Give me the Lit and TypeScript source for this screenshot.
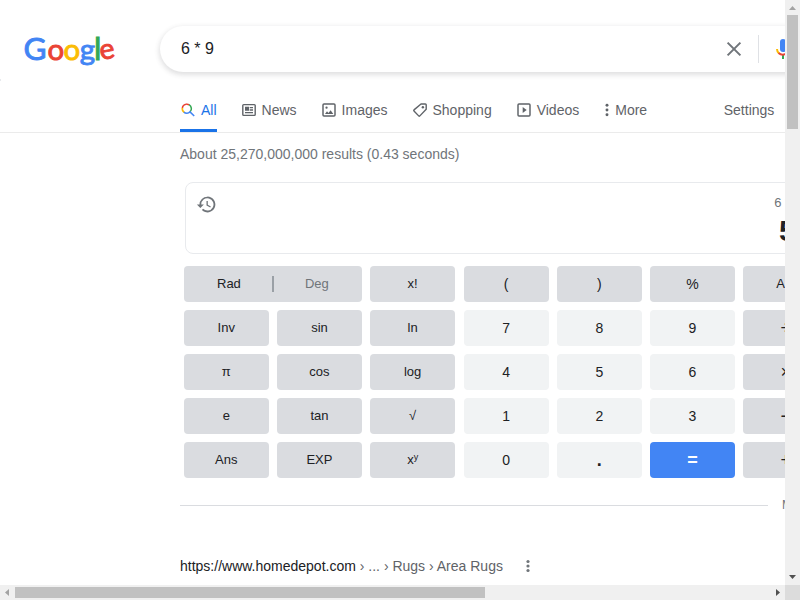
import { LitElement, html, css, svg } from "lit";
import { customElement } from "lit/decorators.js";
import { classMap } from "lit/directives/class-map.js";

const icons = {
  all: svg`<g fill="none" stroke-width="2.3"><path d="M3.500 9.500A6.800 6.800 0 0 1 9.500 3.400" stroke="#ea4335"/><path d="M9.200 3.400A6.800 6.800 0 0 1 14 4.300" stroke="#ea4335"/><path d="M13.600 4A6.800 6.800 0 0 1 15 14.800" stroke="#34a853"/><path d="M3.500 9A6.800 6.800 0 0 0 6.400 15.600" stroke="#fbbc04"/><path d="M5.800 15.100A6.800 6.800 0 0 0 15 14.800L21.300 21.100" stroke="#4285f4"/></g>`,
  news: svg`<path fill="none" stroke="currentColor" stroke-width="2.100" d="M4 4h16a1.300 1.300 0 0 1 1.300 1.300v13.400a1.300 1.300 0 0 1-1.300 1.300H4a1.300 1.300 0 0 1-1.300-1.300V5.300A1.300 1.300 0 0 1 4 4z"/><path fill="currentColor" d="M6 7h6v6H6zM13 7.500h5v2h-5zM13 11h5v2h-5zM6 15h12v2H6z"/>`,
  images: svg`<rect x="3" y="3" width="18" height="18" rx="1.500" fill="none" stroke="currentColor" stroke-width="2.200"/><path fill="currentColor" d="M6 18l3-4 2.200 2.500 3.200-4L18.500 18z"/><circle cx="8.300" cy="8.500" r="1.700" fill="currentColor"/>`,
  shopping: svg`<path fill="none" stroke="currentColor" stroke-width="2.100" stroke-linejoin="round" d="M13.500 3H20a1.300 1.300 0 0 1 1.300 1.300V11L11.800 20.800a1.300 1.300 0 0 1-1.800 0L3 13.600a1.300 1.300 0 0 1 0-1.800z"/><circle cx="16.300" cy="7.800" r="1.800" fill="currentColor"/>`,
  videos: svg`<rect x="3" y="3" width="18" height="18" rx="1.500" fill="none" stroke="currentColor" stroke-width="2.200"/><path fill="currentColor" d="M10 7.500l6 4.500-6 4.500z"/>`,
  more: svg`<circle cx="6" cy="4.800" r="2.200" fill="currentColor"/><circle cx="6" cy="12" r="2.200" fill="currentColor"/><circle cx="6" cy="19.200" r="2.200" fill="currentColor"/>`,
};

const tabs: { id: keyof typeof icons; label: string }[] = [
  { id: "all", label: "All" },
  { id: "news", label: "News" },
  { id: "images", label: "Images" },
  { id: "shopping", label: "Shopping" },
  { id: "videos", label: "Videos" },
  { id: "more", label: "More" },
];

const keys = [
  "x!", "(", ")", "%", "AC",
  "Inv", "sin", "ln", "7", "8", "9", "÷",
  "π", "cos", "log", "4", "5", "6", "×",
  "e", "tan", "√", "1", "2", "3", "−",
  "Ans", "EXP", "xy", "0", ".", "=", "+",
];

@customElement("calc-card")
export class CalcCard extends LitElement {
  static styles = css`
    :host { display: block; width: 644.3px; color: #202124; }
    .display { box-sizing: border-box; height: 72px; margin: 0 1px 12px; border: 1px solid #e8eaed; border-radius: 8px; display: flex; padding: 10px 14px 0 10px; color: #70757a; }
    .history { width: 21px; height: 21px; flex: none; margin-top: .5px; }
    .values { margin-left: auto; text-align: right; white-space: pre; }
    .expr { font-size: 13px; line-height: 18px; padding-top: 1px; }
    .result { font-size: 30px; line-height: 34px; font-weight: bold; color: #202124; margin-top: 2px; }
    .keys { display: grid; grid-template-columns: repeat(7, 85.05px); grid-auto-rows: 36px; gap: 8px 8.15px; }
    .key { background: #dadce0; border-radius: 4px; display: flex; align-items: center; justify-content: center; font-size: 13px; line-height: 34px; padding: 0 .5px 1px 0; box-sizing: border-box; }
    .digit { background: #f1f3f4; }
    .large { font-size: 14px; padding: 0; }
    .operator { font-size: 18px; padding: 0 0 1px; }
    .strong { font-size: 18px; font-weight: bold; padding: 0; }
    .equals { background: #4285f4; color: #fff; }
    .angle { grid-column: span 2; }
    .angle span { flex: 1; text-align: center; padding-left: 2px; }
    .angle .off { color: #70757a; padding: 0 2px 0 0; }
    .split { width: 2px; height: 16px; background: #9aa0a6; }
    sup { font-size: 9px; line-height: 0; vertical-align: 4px; }
  `;
  key(k: string) {
    const digit = /^[0-9.]$/.test(k);
    const cls = {
      key: true,
      digit,
      large: digit || "()%".includes(k),
      operator: "÷×−+".includes(k),
      strong: k === "." || k === "=",
      equals: k === "=",
    };
    return html`<div class=${classMap(cls)}>${k === "xy" ? html`<span>x<sup>y</sup></span>` : k}</div>`;
  }
  render() {
    return html`
      <div class="display">
        <svg class="history" viewBox="0 0 24 24" fill="currentColor"><path d="M13 3a9 9 0 0 0-9 9H1l3.900 3.900.1.100L9 12H6a7 7 0 1 1 2.100 4.900l-1.400 1.400A9 9 0 1 0 13 3zm-1 5v5l4.300 2.500.700-1.200-3.500-2.100V8z"/></svg>
        <div class="values"><div class="expr">6 * 9 =</div><div class="result">54</div></div>
      </div>
      <div class="keys">
        <div class="key angle"><span>Rad</span><i class="split"></i><span class="off">Deg</span></div>
        ${keys.map((k) => this.key(k))}
      </div>`;
  }
}

@customElement("app-root")
export class AppRoot extends LitElement {
  static styles = css`
    :host { display: grid; grid-template: 585px 15px / 785px 15px; width: 800px; height: 600px; overflow: hidden; font-family: "Liberation Sans", Arial, sans-serif; background: #fff; font-size: 14px; color: #5f6368; }
    .page { overflow: hidden; }
    .top { height: 80px; display: flex; box-sizing: border-box; padding-top: 26px; position: relative; }
    .tick { position: absolute; left: 0; top: 79px; width: 1px; height: 2px; background: #e8eaed; }
    .logo { width: 100px; height: 42px; margin: 5px 38px 0 22px; flex: none; font-family: Lato, sans-serif; font-size: 31.5px; }
    .logo .bowl { font-size: 29.5px; }
    .logo .last { font-size: 28.5px; }
    .search { flex: none; box-sizing: border-box; width: 692px; height: 46px; border-radius: 23px; box-shadow: 0 2px 5px 1px rgba(64, 60, 67, .16); display: flex; align-items: center; padding-left: 21px; font-size: 16px; color: #202124; }
    .query { width: 541px; line-height: 20px; padding-bottom: 1px; }
    .clear { width: 24px; height: 24px; }
    .bar { width: 1px; height: 28px; background: #dfe1e5; margin: 0 12px 0 12px; }
    .mic { width: 24px; height: 24px; }
    nav { height: 52px; border-bottom: 1px solid #ebebeb; display: flex; gap: 24px; padding-left: 180px; }
    .tab { display: flex; align-items: center; box-sizing: border-box; height: 52px; padding-top: 10px; border-bottom: 3px solid transparent; white-space: nowrap; }
    .tab svg { width: 16px; height: 16px; margin-right: 5px; }
    .tab .dots { width: 8px; margin-right: 4px; }
    .active { color: #1a73e8; border-color: #1a73e8; }
    .settings { margin-left: 52.6px; }
    .stats { color: #70757a; padding: 11px 0 18px 180px; line-height: 20px; height: 20px; white-space: nowrap; }
    calc-card { margin-left: 184px; }
    .divider { display: flex; align-items: center; width: 660px; margin: 17px 0 0 180px; height: 20px; font-size: 12px; color: #70757a; white-space: nowrap; }
    .divider i { width: 588px; height: 1px; background: #dadce0; margin: 1px 14px 0 0; flex: none; }
    .site { display: flex; align-items: center; margin: 41px 0 0 180px; line-height: 20px; white-space: pre; }
    .domain { color: #202124; }
    .site svg { width: 6px; height: 14px; margin-left: 22px; }
    .vbar { background: #f0f0f0; display: flex; flex-direction: column; align-items: center; }
    .hbar { background: #f0f0f0; display: flex; align-items: center; }
    .arrow { width: 15px; height: 15px; flex: none; }
    .vthumb { width: 11px; height: 114px; background: #c1c1c1; }
    .hthumb { width: 470px; height: 11px; background: #c1c1c1; }
    .vbar .end { margin-top: auto; }
    .hbar .end { margin-left: auto; }
    .corner { background: #dcdcdc; }
  `;
  render() {
    return html`
      <div class="page">
        <header class="top">
          <svg class="logo" viewBox="0 0 100 42"><text y="29" stroke-width=".9"><tspan x="1.400" fill="#4285f4" stroke="#4285f4">G</tspan><tspan class="bowl" x="25.500" y="28.500" fill="#ea4335" stroke="#ea4335">o</tspan><tspan class="bowl" x="41.500" y="28.500" fill="#fbbc05" stroke="#fbbc05">o</tspan><tspan class="bowl" x="57.800" y="28.500" fill="#4285f4" stroke="#4285f4">g</tspan><tspan x="72" y="28.500" fill="#34a853" stroke="#34a853">l</tspan><tspan class="last" x="79" y="29" rotate="-10" fill="#ea4335" stroke="#ea4335">e</tspan></text></svg>
          <div class="search">
            <span class="query">6 * 9</span>
            <svg class="clear" viewBox="0 0 24 24"><path d="M5.600 5.600l12.800 12.800M18.400 5.600L5.600 18.400" stroke="#70757a" stroke-width="2"/></svg>
            <i class="bar"></i>
            <svg class="mic" viewBox="0 0 24 24"><rect x="9" y="2" width="6" height="13" rx="3" fill="#4285f4"/><path d="M11 17.500h2V22h-2z" fill="#34a853"/><path d="M6 12a6 6 0 0 0 2 4.400" fill="none" stroke="#fbbc04" stroke-width="2"/><path d="M7.600 16A6.200 6.200 0 0 0 18 12" fill="none" stroke="#ea4335" stroke-width="2"/></svg>
          </div>
          <i class="tick"></i>
        </header>
        <nav>
          ${tabs.map((t) => html`<span class=${classMap({ tab: true, active: t.id === "all" })}><svg class=${classMap({ dots: t.id === "more" })} viewBox=${t.id === "more" ? "0 0 12 24" : "0 0 24 24"}>${icons[t.id]}</svg>${t.label}</span>`)}
          <span class="tab settings">Settings</span>
        </nav>
        <div class="stats">About 25,270,000,000 results (0.43 seconds)</div>
        <calc-card></calc-card>
        <div class="divider"><i></i>More info</div>
        <div class="site"><span class="domain">https://www.homedepot.com</span> › ... › Rugs › Area Rugs<svg viewBox="0 0 6 14" fill="#70757a"><circle cx="3" cy="2.500" r="1.600"/><circle cx="3" cy="7" r="1.600"/><circle cx="3" cy="11.500" r="1.600"/></svg></div>
      </div>
      <div class="vbar">
        <svg class="arrow" viewBox="0 0 15 15"><path d="M4 10h7L7.500 6z" fill="#a3a3a3"/></svg>
        <div class="vthumb"></div>
        <svg class="arrow end" viewBox="0 0 15 15"><path d="M4 5h7L7.500 9z" fill="#505050"/></svg>
      </div>
      <div class="hbar">
        <svg class="arrow" viewBox="0 0 15 15"><path d="M9 4v7L5 7.500z" fill="#a3a3a3"/></svg>
        <div class="hthumb"></div>
        <svg class="arrow end" viewBox="0 0 15 15"><path d="M6 4v7l4-3.500z" fill="#505050"/></svg>
      </div>
      <div class="corner"></div>`;
  }
}
